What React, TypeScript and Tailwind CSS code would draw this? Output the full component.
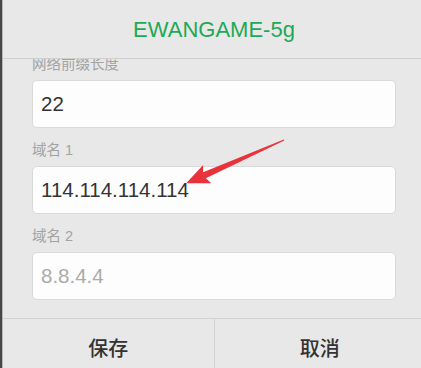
const fields = [
  { label: '网络前缀长度', value: '22', placeholder: '' },
  { label: '域名 1', value: '114.114.114.114', placeholder: '' },
  { label: '域名 2', value: '', placeholder: '8.8.4.4' },
];

const cjk = "font-['Liberation_Sans','Noto_Sans_CJK_SC',sans-serif]";

export default function App() {
  return (
    <div className={`relative flex h-[368px] w-[421px] overflow-hidden bg-[#e8e8e8] ${cjk}`}>
      <div className="w-[2px] shrink-0 bg-[#474747]" />
      <div className="w-[1px] shrink-0 bg-[#b8b8b8]" />

      <div className="flex w-[422px] shrink-0 flex-col bg-[#e8e8e8]">
        <header className="flex h-[59px] shrink-0 items-center justify-center border-b border-[#cfcfcf]">
          <h1 className="text-[22px] text-[#1fa855]">EWANGAME-5g</h1>
        </header>

        <div className="h-[259px] shrink-0 overflow-hidden px-[29px]">
          <div className="-mt-[17px]">
            {fields.map((f) => (
              <div key={f.label}>
                <div className="pt-[12px] pb-[6px] text-[14.5px] leading-[20px] text-[#a3a3a3]">{f.label}</div>
                <input
                  readOnly
                  value={f.value}
                  placeholder={f.placeholder}
                  className="block h-[48px] w-full rounded-[5px] border border-[#d9d9d9] bg-[#fdfdfd] px-[8px] text-[20.5px] text-[#333] outline-none placeholder:text-[#ababab]"
                />
              </div>
            ))}
          </div>
        </div>

        <div className="flex h-[60px] shrink-0 border-t border-[#d2d2d2]">
          <button className="flex-1 text-[20px] font-medium text-[#333]">保存</button>
          <button className="flex-1 border-l border-[#d2d2d2] text-[20px] font-medium text-[#333]">取消</button>
        </div>
      </div>

      <svg className="pointer-events-none absolute inset-0" width="421" height="368">
        <g transform="translate(284 140) rotate(156.1)">
          <path d="M0 -0.6 L87 -3.4 L84 -10 L107 0 L84 10 L87 3.4 L0 0.6 Z" fill="#e8333b" />
        </g>
      </svg>
    </div>
  );
}
